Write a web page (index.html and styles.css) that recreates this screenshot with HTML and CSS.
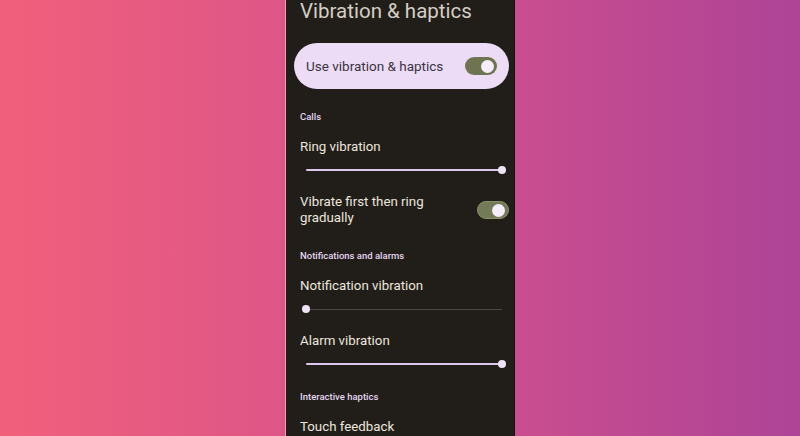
FILE: index.html
```html
<!DOCTYPE html>
<html lang="en">
<head>
<meta charset="utf-8">
<link rel="stylesheet" href="styles.css">
</head>
<body>
<div class="stage">
  <div class="screen">
    <h1 class="title">Vibration &amp; haptics</h1>
    <div class="card">
      <span class="card-label">Use vibration &amp; haptics</span>
      <span class="toggle"><span class="thumb"></span></span>
    </div>

    <div class="header h-calls">Calls</div>
    <div class="item i-ring">Ring vibration</div>
    <div class="slider"><span class="active" style="width:100%"></span><span class="knob"></span><span class="rest"></span></div>

    <div class="row">
      <div class="row-label">Vibrate first then ring<br>gradually</div>
      <span class="toggle toggle-2"><span class="thumb"></span></span>
    </div>

    <div class="header h-notif">Notifications and alarms</div>
    <div class="item">Notification vibration</div>
    <div class="slider"><span class="active" style="width:0%"></span><span class="knob"></span><span class="rest"></span></div>

    <div class="item i-alarm">Alarm vibration</div>
    <div class="slider"><span class="active" style="width:100%"></span><span class="knob"></span><span class="rest"></span></div>

    <div class="header h-inter">Interactive haptics</div>
    <div class="item">Touch feedback</div>
  </div>
</div>
</body>
</html>
```

FILE: styles.css
```css
* { box-sizing: border-box; }
html, body { margin: 0; padding: 0; }
body {
  width: 800px;
  height: 436px;
  overflow: hidden;
  font-family: Roboto, "Open Sans", sans-serif;
  background: linear-gradient(90deg, #f1607b 0%, #d9538b 45%, #ae4397 100%);
}
.stage {
  display: flex;
  justify-content: center;
  height: 436px;
}
.screen {
  width: 230px;
  height: 436px;
  background: #211e19;
  border-left: 1px solid #f49db0;
  border-right: 1px solid #14120f;
  overflow: hidden;
  padding: 0 5px 0 8px;
  display: flex;
  flex-direction: column;
}
.screen > * { flex-shrink: 0; }
.title {
  margin: -7px 0 0 6px;
  font-weight: 400;
  font-size: 20.5px;
  line-height: 36px;
  color: #d4cec4;
  white-space: nowrap;
}
.card {
  margin-top: 14px;
  height: 46px;
  border-radius: 23px;
  background: #ecdcf6;
  display: flex;
  align-items: center;
  justify-content: space-between;
  padding: 0 12px 0 12px;
}
.card-label {
  font-size: 13.5px;
  color: #3a3440;
}
.toggle {
  width: 32px;
  height: 18px;
  border-radius: 9px;
  background: #6e7450;
  display: flex;
  align-items: center;
  justify-content: flex-end;
  padding-right: 3px;
}
.thumb {
  width: 13px;
  height: 13px;
  border-radius: 50%;
  background: #f5edfb;
}
.toggle-2 {
  background: #737a57;
  border: 1px solid #8a9068;
}
.header {
  margin-left: 6px;
  font-size: 9.5px;
  font-weight: 500;
  line-height: 20px;
  color: #e4d6f0;
}
.h-calls { margin-top: 18px; }
.h-notif { margin-top: 20px; }
.h-inter { margin-top: 16px; }
.item {
  margin-left: 6px;
  margin-top: 10px;
  font-size: 13.3px;
  line-height: 20px;
  color: #ece6dd;
}
.i-alarm { margin-top: 15px; }
.slider {
  margin: 6px 7px 0 12px;
  height: 14px;
  display: flex;
  align-items: center;
}
.active {
  height: 2px;
  background: #d9c8ea;
  border-radius: 1px;
}
.knob {
  width: 8px;
  height: 8px;
  border-radius: 50%;
  background: #efe3f8;
  flex: none;
  margin: 0 -4px;
  position: relative;
  z-index: 1;
}
.rest {
  flex: 1;
  height: 1px;
  background: #4b4741;
}
.row {
  margin-top: 17px;
  display: flex;
  align-items: center;
  justify-content: space-between;
}
.row-label {
  margin-left: 6px;
  font-size: 13.3px;
  line-height: 16px;
  color: #ece6dd;
}
```
